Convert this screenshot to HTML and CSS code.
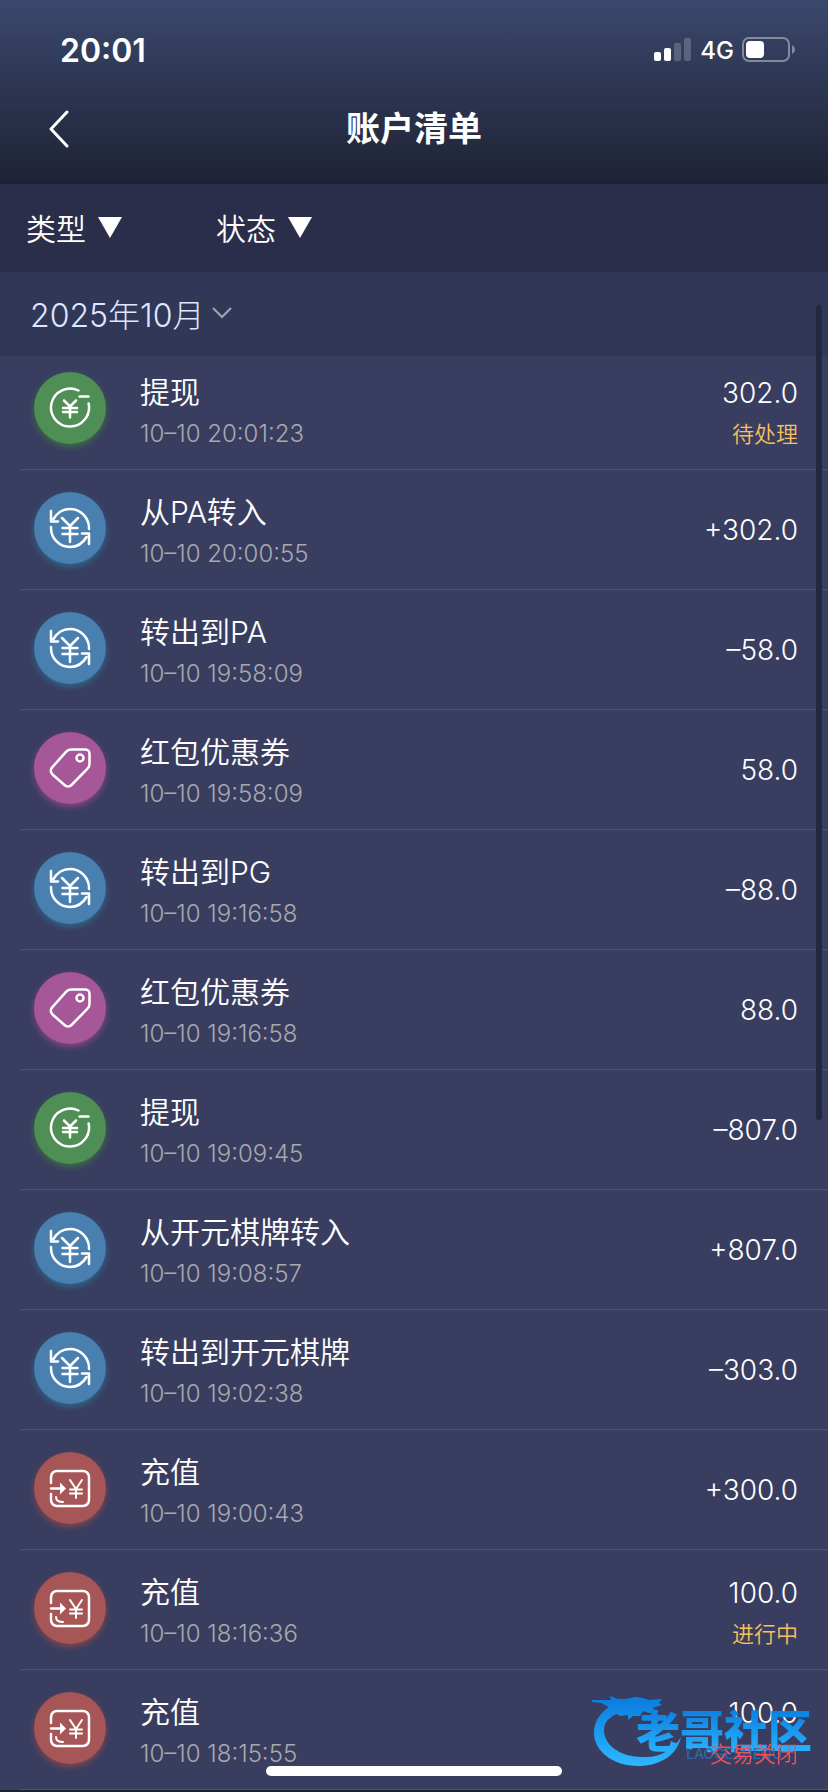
FILE: index.html
```html
<!DOCTYPE html>
<html lang="zh-CN">
<head>
    <meta charset="UTF-8">
    <meta name="viewport" content="width=device-width, initial-scale=1.0">
    <title>账户清单</title>
    <link rel="stylesheet" href="styles.css">
</head>
<body>
    <!-- icons used by the rows -->
    <svg class="sprite" aria-hidden="true">
        <symbol id="withdraw" viewBox="0 0 44 44">
            <path d="M30.500 4.500A19 19 0 1 0 40.600 17.500M31.500 10.500h9M16 14.500l6 6 6-6M22 20.500v11M15 22h14M15 26h14"/>
        </symbol>
        <symbol id="transfer" viewBox="0 0 44 44">
            <path d="M5.500 13C9 7 15 3 22 3a19 19 0 0 1 19 19v1M3 5v10.500h7M3 21v1a19 19 0 0 0 19 19c7 0 13-4 16.500-10M34 27.500h7V38M14 12l8 8 8-8M22 20v16M14.500 22h15M14.500 28h15"/>
        </symbol>
        <symbol id="coupon" viewBox="0 0 44 44">
            <path d="M23 3.500h14.500a4 4 0 0 1 4 4V18c0 2-.8 3.500-2 4.700L23.500 39a5 5 0 0 1-7 0L4.500 28.500a5 5 0 0 1 0-7.500L18 5.800a7 7 0 0 1 5-2.300z"/>
            <circle cx="32" cy="12" r="3.500"/>
        </symbol>
        <symbol id="deposit" viewBox="0 0 44 44">
            <path d="M3 17v-6a6 6 0 0 1 6-6h26a6 6 0 0 1 6 6v23a6 6 0 0 1-6 6H9a6 6 0 0 1-6-6v-6M3 22.500h11"/>
            <path class="thin" d="M8 31c0 3 2 5 7 5"/>
            <path class="thin" d="M22 14l6 9 6-9M28 23v9M22 23.500h12M22 27.500h12"/>
            <path class="solid" d="M12 16.500l6 6-6 6z"/>
        </symbol>
    </svg>

    <header class="top">
        <div class="status-bar">
            <span class="clock">20:01</span>
            <div class="signals">
                <svg class="bars" viewBox="0 0 38 24" aria-hidden="true">
                    <rect x="0" y="14" width="7" height="9" rx="2"/>
                    <rect x="10" y="10" width="7" height="13" rx="2"/>
                    <rect class="off" x="20" y="5" width="7" height="18" rx="2"/>
                    <rect class="off" x="30" y="0" width="7" height="23" rx="2"/>
                </svg>
                <span>4G</span>
                <svg class="battery" viewBox="0 0 54 26" aria-hidden="true">
                    <rect class="shell" x="1" y="1" width="46" height="23" rx="6"/>
                    <rect x="4" y="4" width="18" height="17" rx="4"/>
                    <path class="tip" d="M50 8c4 2 4 7 0 9z"/>
                </svg>
            </div>
        </div>
        <div class="nav">
            <button class="back" aria-label="返回">
                <svg viewBox="0 0 20 38"><path d="M18 2L2 19l16 17"/></svg>
            </button>
            <h1>账户清单</h1>
        </div>
    </header>

    <div class="filters">
        <button>类型<i class="triangle"></i></button>
        <button>状态<i class="triangle"></i></button>
    </div>

    <button class="month">
        2025年10月
        <svg viewBox="0 0 22 14"><path d="M2 2l9 9 9-9"/></svg>
    </button>

    <ul class="records">
        <li>
            <span class="icon green"><svg><use href="#withdraw"/></svg></span>
            <div class="info"><h2>提现</h2><time>10–10 20:01:23</time></div>
            <div class="amount"><b>302.0</b><em>待处理</em></div>
        </li>
        <li>
            <span class="icon blue"><svg><use href="#transfer"/></svg></span>
            <div class="info"><h2>从PA转入</h2><time>10–10 20:00:55</time></div>
            <div class="amount"><b>+302.0</b></div>
        </li>
        <li>
            <span class="icon blue"><svg><use href="#transfer"/></svg></span>
            <div class="info"><h2>转出到PA</h2><time>10–10 19:58:09</time></div>
            <div class="amount"><b>–58.0</b></div>
        </li>
        <li>
            <span class="icon purple"><svg><use href="#coupon"/></svg></span>
            <div class="info"><h2>红包优惠券</h2><time>10–10 19:58:09</time></div>
            <div class="amount"><b>58.0</b></div>
        </li>
        <li>
            <span class="icon blue"><svg><use href="#transfer"/></svg></span>
            <div class="info"><h2>转出到PG</h2><time>10–10 19:16:58</time></div>
            <div class="amount"><b>–88.0</b></div>
        </li>
        <li>
            <span class="icon purple"><svg><use href="#coupon"/></svg></span>
            <div class="info"><h2>红包优惠券</h2><time>10–10 19:16:58</time></div>
            <div class="amount"><b>88.0</b></div>
        </li>
        <li>
            <span class="icon green"><svg><use href="#withdraw"/></svg></span>
            <div class="info"><h2>提现</h2><time>10–10 19:09:45</time></div>
            <div class="amount"><b>–807.0</b></div>
        </li>
        <li>
            <span class="icon blue"><svg><use href="#transfer"/></svg></span>
            <div class="info"><h2>从开元棋牌转入</h2><time>10–10 19:08:57</time></div>
            <div class="amount"><b>+807.0</b></div>
        </li>
        <li>
            <span class="icon blue"><svg><use href="#transfer"/></svg></span>
            <div class="info"><h2>转出到开元棋牌</h2><time>10–10 19:02:38</time></div>
            <div class="amount"><b>–303.0</b></div>
        </li>
        <li>
            <span class="icon red"><svg><use href="#deposit"/></svg></span>
            <div class="info"><h2>充值</h2><time>10–10 19:00:43</time></div>
            <div class="amount"><b>+300.0</b></div>
        </li>
        <li>
            <span class="icon red"><svg><use href="#deposit"/></svg></span>
            <div class="info"><h2>充值</h2><time>10–10 18:16:36</time></div>
            <div class="amount"><b>100.0</b><em>进行中</em></div>
        </li>
        <li>
            <span class="icon red"><svg><use href="#deposit"/></svg></span>
            <div class="info"><h2>充值</h2><time>10–10 18:15:55</time></div>
            <div class="amount"><b>100.0</b><em class="closed">交易关闭</em></div>
        </li>
    </ul>

    <div class="scrollbar"></div>
    <div class="home-bar"></div>

    <div class="watermark">
        <svg viewBox="0 0 92 76" aria-hidden="true">
            <defs>
                <linearGradient id="sky" gradientUnits="userSpaceOnUse" x1="0" y1="10" x2="0" y2="70">
                    <stop offset="0" stop-color="#0b80e0"/>
                    <stop offset="1" stop-color="#2bb4ff"/>
                </linearGradient>
            </defs>
            <!-- ring of the body, then the head -->
            <path fill="url(#sky)" d="M28 10C12 15 2 27 2 41c0 18 19 33 44 33 21 0 39-10 43-29-8 13-22 21-38 20C28 65 12 53 12 38c0-9 7-15 20-19z"/>
            <path fill="url(#sky)" d="M0 8l10 0 9 0-1-4 8 3 8 0 9-2 8 1 6 2 13-1-3 4 3 2-10 3 7 4-10 1-6-2-3 5-7 0-5 4 0-5-8 1-8-5-5-5-6-3-9-1z"/>
        </svg>
        <div class="brand">
            <strong>老哥社区</strong>
            <small>LAOGESHEQU</small>
        </div>
    </div>
</body>
</html>
```
FILE: styles.css
```css
*{
    margin: 0;
    padding: 0;
    box-sizing: border-box;
}
body{
    position: relative;
    min-height: 100vh;
    background-color: #1c2033;
    color: #fff;
    font-family: Inter, "Noto Sans CJK SC", sans-serif;
    font-weight: 300;
}
button{
    border: none;
    background: none;
    color: inherit;
    font: inherit;
    cursor: pointer;
}
svg{
    display: block;
}
.sprite{
    position: absolute;
    width: 0;
    height: 0;
}

/* header */
.top{
    background: linear-gradient(#3b486c, #2f3856 40%, #1e2334);
}
.status-bar{
    display: flex;
    justify-content: space-between;
    align-items: center;
    height: 100px;
    padding: 0 32px 0 60px;
}
.clock{
    font-size: 32px;
    font-weight: 600;
}
.signals{
    display: flex;
    align-items: center;
    gap: 8px;
    font-size: 24px;
    font-weight: 500;
}
.bars{
    width: 38px;
    height: 24px;
    fill: #fff;
}
.bars .off{
    fill: rgba(255,255,255,0.2);
}
.battery{
    width: 54px;
    height: 26px;
    fill: #fff;
}
.battery .shell{
    fill: none;
    stroke: rgba(255,255,255,0.4);
    stroke-width: 2;
}
.battery .tip{
    fill: rgba(255,255,255,0.4);
}
.nav{
    display: grid;
    grid-template-columns: 1fr auto 1fr;
    align-items: center;
    height: 84px;
    padding: 0 49px 26px;
}
.nav h1{
    font-size: 34px;
    font-weight: 600;
    line-height: 56px;
}
.back{
    justify-self: start;
}
.back svg{
    width: 20px;
    height: 38px;
    fill: none;
    stroke: #fff;
    stroke-width: 3;
    stroke-linecap: round;
    stroke-linejoin: round;
}

/* filters */
.filters{
    display: flex;
    gap: 94px;
    height: 88px;
    padding: 0 26px 2px;
    background-color: #2a2e4a;
}
.filters button{
    display: flex;
    align-items: center;
    gap: 12px;
    font-size: 30px;
    font-weight: 350;
}
.triangle{
    border: 12px solid transparent;
    border-top: 21px solid #fff;
    border-bottom: none;
}
.month{
    position: relative;
    display: flex;
    align-items: center;
    gap: 7px;
    width: 100%;
    height: 84px;
    margin-bottom: -6px;
    padding: 0 30px 2px;
    background-color: #313756;
    color: #dfe6ff;
    font-size: 32px;
}
.month svg{
    width: 22px;
    height: 14px;
    fill: none;
    stroke: #a4a5ae;
    stroke-width: 2;
}

/* records */
.records{
    list-style: none;
    padding-left: 20px;
    background-color: #393e61;
}
.records li{
    display: flex;
    align-items: center;
    height: 120px;
    padding-right: 30px;
    border-bottom: 1px solid #4d5278;
}
.icon{
    display: flex;
    align-items: center;
    justify-content: center;
    width: 72px;
    height: 72px;
    margin: 0 34px 4px 14px;
    border-radius: 50%;
}
.icon svg{
    width: 44px;
    height: 44px;
    fill: none;
    stroke: #fff;
    stroke-width: 2.5;
    stroke-linecap: round;
    stroke-linejoin: round;
}
.thin{
    stroke-width: 2;
}
.solid{
    fill: #fff;
    stroke: none;
}
.green{
    background-color: #4f8f55;
    box-shadow: 0 3px 6px rgba(66,140,50,0.6);
}
.blue{
    background-color: #4a80b0;
    box-shadow: 0 3px 6px rgba(40,130,170,0.6);
}
.purple{
    background-color: #a65797;
    box-shadow: 0 3px 6px rgba(180,80,150,0.6);
}
.red{
    background-color: #a65656;
    box-shadow: 0 3px 6px rgba(180,75,65,0.6);
}
.info{
    flex: 1;
}
.info h2{
    font-size: 30px;
    font-weight: 350;
    line-height: 48px;
}
.info time{
    display: block;
    color: #a9a9ad;
    font-size: 24px;
    line-height: 36px;
}
.amount{
    text-align: right;
}
.amount b{
    display: block;
    font-size: 28px;
    font-weight: 300;
    line-height: 48px;
}
.amount em{
    display: block;
    color: #f8bf5c;
    font-size: 22px;
    font-style: normal;
    font-weight: 350;
    line-height: 34px;
}
.amount .closed{
    position: relative;
    z-index: 2;
    color: #f1515a;
}

/* things over the page */
.scrollbar{
    position: absolute;
    top: 305px;
    right: 6px;
    width: 6px;
    height: 815px;
    border-radius: 3px;
    background-color: #23273f;
}
.home-bar{
    position: fixed;
    bottom: 16px;
    left: 50%;
    width: 296px;
    height: 10px;
    margin-left: -148px;
    border-radius: 5px;
    background-color: #fff;
}
.watermark{
    position: fixed;
    right: 16px;
    bottom: 24px;
    display: flex;
    align-items: flex-end;
}
.watermark svg{
    width: 92px;
    height: 76px;
    margin-right: -48px;
}
.brand{
    padding-bottom: 6px;
}
.brand strong{
    display: block;
    margin-bottom: -8px;
    background: linear-gradient(#0b80e0, #2bb4ff);
    background-clip: text;
    -webkit-background-clip: text;
    color: transparent;
    font-size: 44px;
    font-weight: 900;
    line-height: 44px;
}
.brand small{
    display: block;
    padding-left: 50px;
    color: #2a6cab;
    font-size: 14px;
    font-weight: 500;
    line-height: 16px;
}
```
